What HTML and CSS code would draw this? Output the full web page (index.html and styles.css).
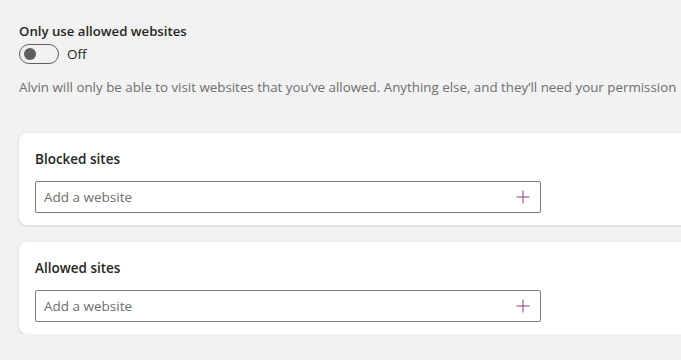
FILE: index.html
```html
<!DOCTYPE html>
<html lang="en">
<head>
  <meta charset="UTF-8">
  <title>Allowed websites</title>
  <link rel="stylesheet" href="styles.css">
</head>
<body>
  <div class="page">
    <div class="setting">
      <h3 class="setting-title">Only use allowed websites</h3>
      <div class="toggle-row">
        <span class="toggle"><span class="toggle-knob"></span></span>
        <span class="toggle-label">Off</span>
      </div>
      <p class="setting-desc">Alvin will only be able to visit websites that you’ve allowed. Anything else, and they’ll need your permission</p>
    </div>

    <!-- Blocked sites -->
    <div class="card">
      <h4 class="card-title">Blocked sites</h4>
      <div class="site-input">
        <span class="placeholder">Add a website</span>
        <svg class="plus" width="14" height="14" viewBox="0 0 14 14"><path d="M7 0.5V13.5M0.5 7H13.5" stroke="#8a3f80" stroke-width="1" fill="none"/></svg>
      </div>
    </div>

    <!-- Allowed sites -->
    <div class="card">
      <h4 class="card-title">Allowed sites</h4>
      <div class="site-input">
        <span class="placeholder">Add a website</span>
        <svg class="plus" width="14" height="14" viewBox="0 0 14 14"><path d="M7 0.5V13.5M0.5 7H13.5" stroke="#8a3f80" stroke-width="1" fill="none"/></svg>
      </div>
    </div>
  </div>
</body>
</html>
```

FILE: styles.css
```css
body {
  margin: 0;
  background-color: #f2f2f2;
  font-family: "Open Sans", "Noto Sans", Arial, sans-serif;
  color: #1f1f1f;
  overflow: hidden;
}

.page {
  padding: 22px 0 0 19px;
  width: 720px;
}

.setting-title {
  margin: 0;
  font-size: 13.2px;
  font-weight: 600;
  line-height: 18px;
  color: #262626;
}

.toggle-row {
  display: flex;
  align-items: center;
  gap: 8px;
  margin-top: 4px;
}

.toggle {
  box-sizing: border-box;
  width: 40px;
  height: 20px;
  border: 1px solid #5f5f5f;
  border-radius: 10px;
  display: flex;
  align-items: center;
  padding-left: 4px;
}

.toggle-knob {
  width: 12px;
  height: 12px;
  border-radius: 50%;
  background-color: #5f5f5f;
}

.toggle-label {
  font-size: 13.5px;
  color: #262626;
}

.setting-desc {
  margin: 14px 0 0;
  font-size: 13.35px;
  line-height: 18px;
  color: #6e6e6e;
  white-space: nowrap;
}

.card {
  background-color: #ffffff;
  border-radius: 8px;
  box-shadow: 0 1px 3px rgba(0, 0, 0, 0.14);
  padding: 17px 16px 12px;
  margin-top: 37px;
}

.card + .card {
  margin-top: 17px;
}

.card-title {
  margin: 0;
  font-size: 13.5px;
  font-weight: 600;
  line-height: 18px;
  color: #262626;
}

.site-input {
  box-sizing: border-box;
  width: 506px;
  height: 32px;
  margin-top: 13px;
  border: 1px solid #7a7a7a;
  border-radius: 2px;
  display: flex;
  align-items: center;
  justify-content: space-between;
  padding: 0 10px 0 8px;
}

.placeholder {
  font-size: 13.5px;
  color: #6e6e6e;
}

.plus {
  display: block;
}
```
